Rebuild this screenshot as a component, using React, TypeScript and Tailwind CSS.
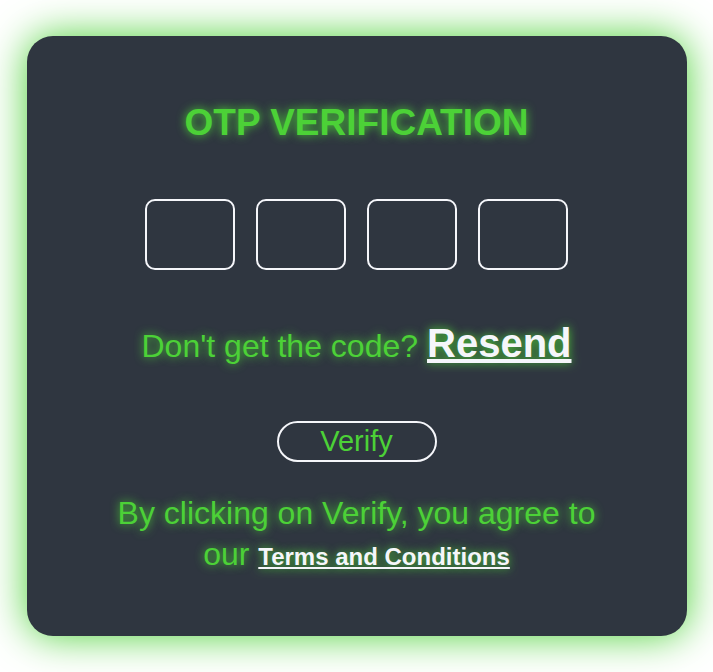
import { useRef } from "react";

const glow = "[text-shadow:0_0_10px_#4cd137]";

export default function App() {
  const refs = useRef<(HTMLInputElement | null)[]>([]);

  const onType = (i: number, v: string) => {
    if (v && i < 3) refs.current[i + 1]?.focus();
  };

  return (
    <div className="min-h-screen flex items-center justify-center bg-white font-['Liberation_Sans',Arial,sans-serif]">
      {/* card */}
      <div className="w-[660px] h-[600px] rounded-[26px] bg-[#2f3640] shadow-[0_0_40px_#4cd137] flex flex-col items-center pt-[66px]">
        <h1 className={`text-[37px] leading-[42px] font-bold text-[#4cd137] ${glow}`}>
          OTP VERIFICATION
        </h1>

        {/* code boxes */}
        <div className="mt-[55px] flex gap-[21px]">
          {[0, 1, 2, 3].map((i) => (
            <input
              key={i}
              ref={(el) => {
                refs.current[i] = el;
              }}
              maxLength={1}
              onChange={(e) => onType(i, e.target.value)}
              className="w-[90px] h-[71px] rounded-[10px] border-2 border-[#f5f6fa] bg-transparent text-center text-[32px] text-[#f5f6fa] outline-none"
            />
          ))}
        </div>

        <div className="mt-[50px] flex items-baseline justify-center gap-[9px]">
          <span className={`text-[32px] leading-[46px] text-[#4cd137] ${glow}`}>
            Don't get the code?
          </span>
          <a
            href="#"
            className={`text-[40px] leading-[46px] font-bold text-[#f5f6fa] underline ${glow}`}
          >
            Resend
          </a>
        </div>

        <button className="mt-[52px] w-[160px] h-[41px] rounded-full border-2 border-[#f5f6fa] text-[29px] leading-[37px] text-[#4cd137]">
          Verify
        </button>

        <p className={`mt-[31px] max-w-[510px] text-center text-[32px] leading-[41px] text-[#4cd137] ${glow}`}>
          By clicking on Verify, you agree to our{" "}
          <a href="#" className="text-[24px] leading-none font-bold text-[#f5f6fa] underline">
            Terms and Conditions
          </a>
        </p>
      </div>
    </div>
  );
}
